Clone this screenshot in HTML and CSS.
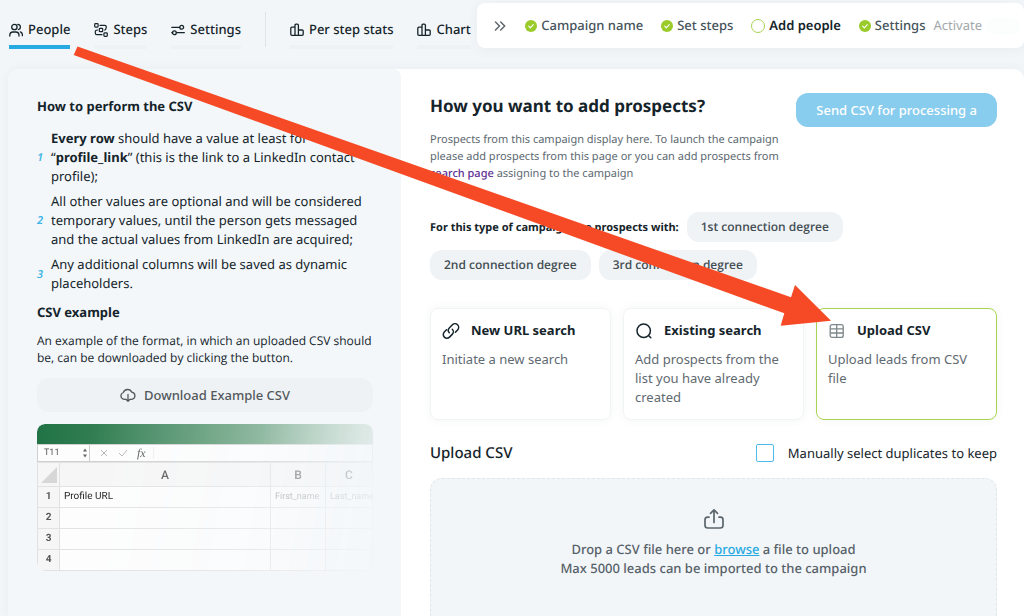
FILE: index.html
```
<!DOCTYPE html>
<html lang="en">
<head>
<meta charset="utf-8">
<title>Add people</title>
<link rel="stylesheet" href="styles.css">
</head>
<body>
<svg class="defs" aria-hidden="true">
  <symbol id="check" viewBox="0 0 12 12"><circle cx="6" cy="6" r="6" fill="#9acb2b"/><path d="M3.7 6.2l1.6 1.6 3-3.2" fill="none" stroke="#fff" stroke-width="1.1" stroke-linecap="round" stroke-linejoin="round"/></symbol>
  <symbol id="bars" viewBox="0 0 14 14"><path d="M5 12.4V2.3Q5 1.2 6 1.2h1.3q1.1 0 1.1 1.1v10.1M5 4.2H1.9q-1.1 0-1.1 1v6.1q0 1.1 1.1 1.1h10.2q1.1 0 1.1-1.1V8q0-1-1.1-1H8.400" fill="none" stroke="currentColor" stroke-width="1.3"/></symbol>
</svg>
<header class="topbar">
  <nav class="tabs">
    <a class="tab tab-active" href="#people">
      <svg class="tab-icon" viewBox="0 0 14 14" fill="none" stroke="currentColor" stroke-width="1.3" stroke-linecap="round"><circle cx="5.400" cy="4" r="2.700"/><path d="M.8 13v-.8c0-2.200 1.300-3.200 3.200-3.200h2.800c1.900 0 3.200 1 3.200 3.200v.8M8.800 1.300a2.700 2.700 0 0 1 .6 5.300M11.400 8.800c1.300.400 2 1.400 2 3.200v.7"/></svg>
      People</a>
    <a class="tab" href="#steps">
      <svg class="tab-icon" viewBox="0 0 14 14" fill="none" stroke="currentColor" stroke-width="1.2" stroke-linecap="round"><rect x=".7" y=".7" width="3.400" height="3.400" rx=".8"/><rect x="5.300" y="5.300" width="3.400" height="3.400" rx=".8"/><rect x="9.900" y="9.900" width="3.400" height="3.400" rx=".8"/><path d="M6 2.400h4.800c1 0 1.500.5 1.500 1.400S11.800 7 10.600 7M3.500 7C2 7 1.300 7.600 1.300 8.500v1.600c0 1 .7 1.600 1.500 1.600H8"/></svg>
      Steps</a>
    <a class="tab" href="#settings">
      <svg class="tab-icon" viewBox="0 0 14 14" fill="none" stroke="currentColor" stroke-width="1.3" stroke-linecap="round"><path d="M.8 4.300h7.800M13.300 9.700H5.400M.8 9.700h.9"/><circle cx="10.700" cy="4.300" r="1.900"/><circle cx="3.400" cy="9.700" r="1.900"/></svg>
      Settings</a>
    <span class="divider"></span>
    <a class="tab" href="#per-step"><svg class="tab-icon"><use href="#bars"/></svg>Per step stats</a>
    <a class="tab" href="#chart"><svg class="tab-icon"><use href="#bars"/></svg>Chart</a>
  </nav>
  <div class="wizard">
    <button class="collapse" aria-label="Collapse"><svg viewBox="0 0 12 10" fill="none" stroke="#5d666d" stroke-width="1.5" stroke-linecap="round" stroke-linejoin="round"><path d="M1.500 1l4 4-4 4M6.700 1l4 4-4 4"/></svg></button>
    <ol class="wizard-steps">
      <li class="wstep"><svg><use href="#check"/></svg>Campaign name</li>
      <li class="wstep"><svg><use href="#check"/></svg>Set steps</li>
      <li class="wstep wstep-current"><span class="ring"></span>Add people</li>
      <li class="wstep"><svg><use href="#check"/></svg>Settings</li>
    </ol>
    <label class="activate">Activate <input class="toggle" type="checkbox" disabled></label>
  </div>
</header>
<main class="panel">
  <aside class="guide">
    <h2 class="guide-title">How to perform the CSV</h2>
    <ol class="rules">
      <li class="rule"><i>1</i><p><b>Every row</b> should have a value at least for “<b>profile_link</b>” (this is the link to a LinkedIn contact profile);</p></li>
      <li class="rule"><i>2</i><p>All other values are optional and will be considered temporary values, until the person gets messaged and the actual values from LinkedIn are acquired;</p></li>
      <li class="rule"><i>3</i><p>Any additional columns will be saved as dynamic placeholders.</p></li>
    </ol>
    <h2 class="guide-title example-title">CSV example</h2>
    <p class="example-text">An example of the format, in which an uploaded CSV should be, can be downloaded by clicking the button.</p>
    <button class="download"><svg viewBox="0 0 16 14" fill="none" stroke="#52585c" stroke-width="1.300" stroke-linecap="round" stroke-linejoin="round"><path d="M5 11.300H4.200A3.500 3.500 0 0 1 3.300 4.500a4.600 4.600 0 0 1 8.500-.3 3.600 3.600 0 0 1 .2 7.100h-1M8 6.500v6.700M5.900 11.200L8 13.300l2.100-2.100"/></svg>Download Example CSV</button>
    <div class="sheet">
      <div class="sheet-top"></div>
      <div class="sheet-bar">
        <span class="sheet-cell">T11<svg viewBox="0 0 4 10"><path d="M0 3.500L2 .5l2 3zM0 6.500h4l-2 3z" fill="#666"/></svg></span>
        <svg class="sheet-tools" viewBox="0 0 28 10" fill="none" stroke="#b5b5b5"><path d="M1 2l6 6M7 2L1 8M19 5l3 3 5-6"/></svg>
        <em>fx</em>
      </div>
      <table class="grid">
        <tr class="grid-head"><th class="corner"><svg viewBox="0 0 18 18"><path d="M17 1v16H1z" fill="#d7d7d7"/></svg></th><th class="col-a">A</th><th class="col-b">B</th><th>C</th></tr>
        <tr><th>1</th><td>Profile URL</td><td class="dim">First_name</td><td class="dim">Last_name</td></tr>
        <tr><th>2</th><td></td><td></td><td></td></tr>
        <tr><th>3</th><td></td><td></td><td></td></tr>
        <tr><th>4</th><td></td><td></td><td></td></tr>
      </table>
    </div>
  </aside>
  <section class="content">
    <div class="intro">
      <div class="intro-text">
        <h1>How you want to add prospects?</h1>
        <p>Prospects from this campaign display here. To launch the campaign please add prospects from this page or you can add prospects from <a href="#search">search page</a> assigning to the campaign</p>
      </div>
      <button class="send">Send CSV for processing a</button>
    </div>
    <div class="degrees">
      <span class="degrees-label">For this type of campaign use prospects with:</span>
      <span class="chip">1st connection degree</span>
      <span class="chip">2nd connection degree</span>
      <span class="chip">3rd connection degree</span>
    </div>
    <div class="sources">
      <button class="card">
        <span class="card-title"><svg viewBox="0 0 18 18" fill="none" stroke="#15242a" stroke-width="1.500" stroke-linecap="round"><path d="M7.300 10.800a3.700 3.700 0 0 1 .2-5.100l2.900-2.900a3.600 3.600 0 0 1 5.200 5.100l-2.200 2.300M10.300 7.200a3.700 3.700 0 0 1-.1 5.200l-2.700 2.700A3.600 3.600 0 0 1 2.300 10l2.200-2.200"/></svg>New URL search</span>
        <span class="card-text">Initiate a new search</span>
      </button>
      <button class="card">
        <span class="card-title"><svg viewBox="0 0 18 18" fill="none" stroke="#15242a" stroke-width="1.500" stroke-linecap="round"><circle cx="8.700" cy="8.700" r="6.700"/><path d="M14 14l1.800 1.800"/></svg>Existing search</span>
        <span class="card-text">Add prospects from the list you have already created</span>
      </button>
      <button class="card card-selected">
        <span class="card-title"><svg viewBox="0 0 18 18" fill="none" stroke="#7e878c" stroke-width="1.300"><rect x="2.200" y="2.600" width="13" height="12.800" rx="2"/><path d="M2.200 6.800h13M2.200 11h13M8.700 2.600v12.800"/></svg>Upload CSV</span>
        <span class="card-text">Upload leads from CSV file</span>
      </button>
    </div>
    <div class="upload-head">
      <h2>Upload CSV</h2>
      <label class="dupes"><input type="checkbox">Manually select duplicates to keep</label>
    </div>
    <div class="dropzone">
      <svg viewBox="0 0 22 22" fill="none" stroke="#5a656c" stroke-width="1.700" stroke-linecap="round" stroke-linejoin="round"><path d="M11 14.500V2M7.500 5.300L11 1.800l3.500 3.500M6 9.200H4.500Q2 9.200 2 11.700v5.600Q2 20 4.700 20h12.600q2.700 0 2.700-2.700v-5.600q0-2.500-2.500-2.500H16"/></svg>
      <p>Drop a CSV file here or <a href="#browse">browse</a> a file to upload</p>
      <p>Max 5000 leads can be imported to the campaign</p>
    </div>
  </section>
</main>
<svg class="pointer" viewBox="0 0 1024 616" aria-hidden="true"><path d="M77.500 46.500L791 297.300 795 285l36 35.700-50.300 5 3.600-12.400L73.700 55z" fill="#f54a25"/></svg>
</body>
</html>
```
FILE: styles.css
```
* { box-sizing: border-box; margin: 0; padding: 0; }
html { overflow: hidden; }
body {
  height: 100vh;
  overflow: hidden;
  display: flex;
  flex-direction: column;
  position: relative;
  background: #f2f6f9;
  color: #15242a;
  font: 13px/19px "Noto Sans", sans-serif;
  text-rendering: geometricPrecision;
}
button { font: inherit; color: inherit; border: 0; background: none; text-align: left; }
ol { list-style: none; }
svg { flex: none; display: block; }
.defs { position: absolute; width: 0; height: 0; }

.topbar { position: relative; flex: none; height: 69px; padding: 12px 0 0 9px; }
.tabs { display: flex; gap: 24px; }
.tab {
  display: flex;
  align-items: center;
  gap: 5px;
  height: 37px;
  padding-top: 2px;
  border-bottom: 4px solid #eef2f4;
  border-radius: 3px 3px 0 0;
  color: #15242a;
  font-weight: 500;
  white-space: nowrap;
  text-decoration: none;
}
.tab-active { border-color: #27aae1; }
.tab-icon { width: 14px; height: 14px; }
.divider { width: 1px; height: 35px; background: #dfe4e8; }

.wizard {
  position: absolute;
  top: 3px;
  right: 0;
  display: flex;
  align-items: center;
  height: 45px;
  padding: 0 4px 0 17px;
  background: #fff;
  border-radius: 8px;
  box-shadow: 0 2px 12px rgba(60, 90, 110, .06);
  color: #46545b;
  font-weight: 500;
  white-space: nowrap;
}
.collapse svg { width: 12px; height: 10px; }
.wizard-steps { display: flex; gap: 18px; margin-left: 19px; }
.wstep { display: flex; align-items: center; gap: 4px; }
.wstep svg { width: 12px; height: 12px; }
.wstep-current { color: #15242a; font-weight: 600; }
.ring { width: 14px; height: 14px; border: 1px solid #a9d350; border-radius: 50%; }
.activate { display: flex; align-items: center; gap: 4px; margin-left: 8px; color: #a3a8ab; font-weight: 400; }
.toggle { appearance: none; width: 34px; height: 18px; border-radius: 9px; background: #fcfdfd; }

.panel { flex: 1; display: flex; min-height: 0; margin-left: 8px; background: #fff; border-radius: 12px 10px 0 0; box-shadow: 0 0 10px rgba(60, 90, 110, .06); }
.guide { flex: 0 0 393px; padding: 28px 28px 0 29px; background: #f3f7fa; border-radius: 12px 8px 0 0; }
.guide-title { font-size: 13px; line-height: 19px; font-weight: 700; }
.rules { display: grid; gap: 6px; margin-top: 13px; }
.rule { display: flex; align-items: center; gap: 7px; }
.rule i { width: 7px; color: #3db4e6; font-size: 11px; font-weight: 600; }
.rule p { flex: 1; }
.rule b { font-weight: 700; }
.example-title { margin-top: 10px; }
.example-text { margin-top: 10px; font: 500 12px/17px "Open Sans", "Noto Sans", sans-serif; }
.download {
  display: flex;
  align-items: center;
  justify-content: center;
  gap: 8px;
  width: 100%;
  height: 34px;
  margin-top: 12px;
  border-radius: 12px;
  background: #eff2f5;
  color: #52585c;
  font-weight: 500;
}
.download svg { width: 16px; height: 14px; }

.sheet {
  margin-top: 12px;
  overflow: hidden;
  border-radius: 8px;
  background: #fdfdfd;
  color: #555;
  font: 10px/12px Roboto, sans-serif;
  mask-image: linear-gradient(100deg, #000 15%, rgba(0, 0, 0, .7) 62%, transparent 105%);
}
.sheet-top { height: 20px; background: linear-gradient(90deg, #217346, #4f9168 50%, #92b9a0); }
.sheet-bar { display: flex; align-items: center; height: 18px; border: 1px solid #d0d0d0; }
.sheet-cell { display: flex; align-items: center; justify-content: space-between; width: 52px; height: 100%; padding: 0 2px 0 6px; border-right: 1px solid #ccc; font-size: 9px; }
.sheet-cell svg { width: 4px; height: 10px; }
.sheet-tools { width: 28px; height: 10px; margin: 0 9px 0 10px; }
.sheet-bar em { padding-right: 7px; border-right: 1px solid #eee; font: italic 12px/12px "Liberation Serif", serif; }
.grid { width: 100%; table-layout: fixed; border-collapse: collapse; }
.grid th, .grid td { height: 21px; border: 1px solid #e2e2e2; }
.grid th { background: #f6f6f6; font-weight: 700; text-align: center; }
.grid td { padding-left: 4px; color: #222; white-space: nowrap; }
.grid .grid-head th { height: 24px; font-size: 12px; font-weight: 500; }
.grid .corner { width: 22px; }
.grid .col-a { width: 211px; }
.grid .col-b { width: 55px; }
.corner svg { width: 18px; height: 18px; margin: auto; }
.grid .dim { color: #999; font-size: 9px; }

.content { flex: 1; min-width: 0; display: flex; flex-direction: column; padding: 24px 27px 0 29px; }
.intro { display: flex; align-items: flex-start; justify-content: space-between; }
.intro-text { flex: 1; }
h1 { font-size: 17px; line-height: 25px; font-weight: 700; }
.intro-text p { margin-top: 13px; color: #5c6870; font-size: 11px; line-height: 17px; }
.intro-text a { color: #5e2d91; font-weight: 500; text-decoration: none; }
.send { flex: none; height: 34px; padding: 0 20px; border-radius: 12px; background: #89cdee; color: #fff; font-weight: 500; white-space: nowrap; }
.degrees { display: flex; flex-wrap: wrap; align-items: center; gap: 8px; margin-top: 30px; font: 600 12px/17px "Open Sans", "Noto Sans", sans-serif; }
.degrees-label { font: 700 11px/17px "Noto Sans", sans-serif; }
.chip { height: 30px; padding: 0 14px; border-radius: 12px; background: #eff3f6; color: #444e54; line-height: 30px; }
.sources { display: grid; grid-template-columns: repeat(3, 1fr); gap: 12px; margin-top: 28px; }
.card {
  display: flex;
  flex-direction: column;
  gap: 10px;
  min-height: 111px;
  padding: 12px 11px;
  border: 1px solid #f1f4f6;
  border-radius: 8px;
  box-shadow: 0 0 10px rgba(60, 90, 110, .06);
}
.card-selected { border-color: #a9d350; }
.card-title { display: flex; align-items: center; gap: 11px; font-weight: 700; }
.card-title svg { width: 18px; height: 18px; }
.card-text { color: #5f6a71; }
.upload-head { display: flex; align-items: center; justify-content: space-between; margin-top: 21px; }
.upload-head h2 { font-size: 15px; line-height: 24px; font-weight: 500; }
.dupes { display: flex; align-items: center; gap: 14px; }
.dupes input { appearance: none; width: 18px; height: 18px; border: 1px solid #4fbbe8; border-radius: 2px; }
.dropzone {
  flex: 1;
  display: flex;
  flex-direction: column;
  align-items: center;
  margin-top: 13px;
  padding-top: 29px;
  border: 1px dashed #dfe6ea;
  border-bottom: 0;
  border-radius: 12px 12px 0 0;
  background: #f3f6f9;
  color: #566168;
  font-weight: 500;
}
.dropzone svg { width: 22px; height: 22px; margin-bottom: 10px; }
.dropzone a { color: #27aae1; }

.pointer { position: absolute; top: 0; left: 0; width: 1024px; height: 616px; pointer-events: none; }
```
